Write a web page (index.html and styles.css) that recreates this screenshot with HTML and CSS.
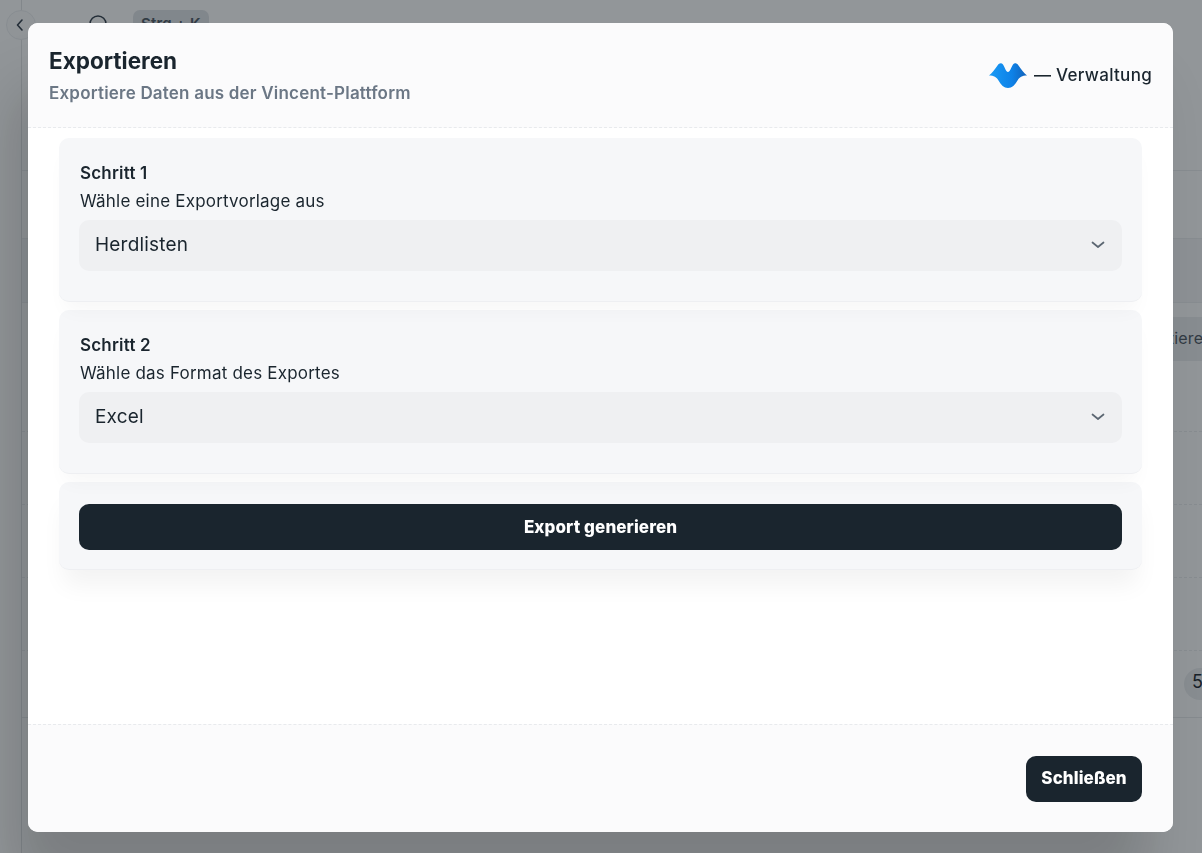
FILE: index.html
```html
<!DOCTYPE html>
<html lang="de">
<head>
<meta charset="utf-8">
<title>Exportieren</title>
<link rel="stylesheet" href="styles.css">
</head>
<body>
<div class="app">
  <aside class="rail"></aside>
  <main class="page">
    <div class="topbar">
      <span class="back"><svg width="10" height="14" viewBox="0 0 10 14"><path d="M7 2 2.500 7 7 12" fill="none" stroke="#2f3a47" stroke-width="1.600" stroke-linecap="round" stroke-linejoin="round"/></svg></span>
      <svg class="search" width="22" height="22" viewBox="0 0 22 22"><circle cx="10" cy="10" r="8" fill="none" stroke="#2f3a47" stroke-width="1.500"/></svg>
      <span class="kbd">Strg + K</span>
    </div>
    <div class="rows">
      <div class="row r1"></div>
      <div class="row r2"></div>
      <div class="row r5"><span class="chip">Exportieren</span></div>
      <div class="row r3"></div>
      <div class="row r3"></div>
      <div class="row r3"></div>
      <div class="row r4"><span class="num">50</span></div>
    </div>
  </main>
</div>
<div class="overlay"></div>
<section class="modal">
  <header class="head">
    <div>
      <h1>Exportieren</h1>
      <p class="sub">Exportiere Daten aus der Vincent-Plattform</p>
    </div>
    <div class="brand">
      <svg width="38" height="26" viewBox="0 0 38 26">
        <defs><linearGradient id="g" x1="0" x2="1" y1="0" y2="0"><stop offset="0" stop-color="#1a9bf5"/><stop offset=".6" stop-color="#0e82e8"/><stop offset="1" stop-color="#1160b8"/></linearGradient></defs>
        <path d="M0 13.500C3 11.500 6 7 8.500 3.500 10 1 12.500.5 14 2.500 16 5.500 17 10 19 10 21 10 22 5.500 24 2.500 25.500.5 28 1 29.500 3.500 32 7 35 11.500 38 13.500 33 13.500 30.500 15 28.500 18.500 26 23 23 26 19 26 15 26 12 23 9.500 18.500 7.500 15 5 13.500 0 13.500Z" fill="url(#g)"/>
      </svg>
      <span>— Verwaltung</span>
    </div>
  </header>
  <div class="content">
    <div class="card">
      <h2>Schritt 1</h2>
      <label class="hint">Wähle eine Exportvorlage aus</label>
      <div class="select"><span>Herdlisten</span><svg width="14" height="8" viewBox="0 0 14 8"><path d="M1.500 1.500 7 6 12.500 1.500" fill="none" stroke="#5b6672" stroke-width="1.700" stroke-linecap="round" stroke-linejoin="round"/></svg></div>
    </div>
    <div class="card">
      <h2>Schritt 2</h2>
      <label class="hint">Wähle das Format des Exportes</label>
      <div class="select"><span>Excel</span><svg width="14" height="8" viewBox="0 0 14 8"><path d="M1.500 1.500 7 6 12.500 1.500" fill="none" stroke="#5b6672" stroke-width="1.700" stroke-linecap="round" stroke-linejoin="round"/></svg></div>
    </div>
    <div class="card action">
      <button class="btn wide">Export generieren</button>
    </div>
  </div>
  <footer class="foot">
    <button class="btn close">Schließen</button>
  </footer>
</section>
</body>
</html>
```
FILE: styles.css
```css
* { box-sizing: border-box; }
html, body { margin: 0; height: 100%; overflow: hidden; }
body { font-family: Inter, "Liberation Sans", sans-serif; color: #1a252e; background: #fff; letter-spacing: .2px; }

.app { display: flex; height: 853px; width: 1202px; }
.rail { width: 22px; flex: none; border-right: 1px solid #e0e2e4; }
.page { flex: 1; min-width: 0; }
.topbar { height: 170px; display: flex; align-items: flex-start; }
.back { width: 30px; height: 30px; margin: 10px 0 0 -16px; border-radius: 50%; background: #fbfbfc; border: 1px solid #eceef0; display: flex; align-items: center; justify-content: center; flex: none; }
.back svg { margin-left: -2px; }
.search { margin: 14px 0 0 52px; flex: none; }
.kbd { margin: 10px 0 0 23px; height: 26px; padding: 4px 8px; border-radius: 7px; background: #dfe2e6; font-size: 15px; font-weight: 600; color: #4b5560; }
.row { border-top: 1px solid #eceef0; }
.r1 { height: 68px; }
.r2 { height: 64px; background: #f5f6f8; }
.r5 { height: 129px; display: flex; justify-content: flex-end; align-items: flex-start; }
.r3 { height: 73px; border-top-style: dashed; }
.r4 { height: 68px; border-top-style: dashed; border-bottom: 1px solid #e8eaec; display: flex; align-items: center; justify-content: flex-end; }
.chip { margin: 14px -11px 0 0; padding: 11px 0 0; background: #eceef0; border-radius: 6px 0 0 6px; font-size: 16px; color: #4b5560; width: 48px; height: 44px; overflow: hidden; white-space: nowrap; display: flex; justify-content: flex-end; }
.num { width: 18px; height: 32px; padding: 3px 0 0 8px; background: #eceef0; border-radius: 16px 0 0 16px; font-size: 18px; overflow: hidden; white-space: nowrap; color: #1a252e; }

.overlay { position: fixed; inset: 0; background: rgba(24, 32, 38, .47); }

.modal { position: fixed; left: 28px; top: 23px; width: 1145px; height: 809px; background: #fff; border-radius: 10px; display: flex; flex-direction: column; box-shadow: -20px 60px 60px -5px rgba(0, 0, 0, .17); }
.head { height: 105px; flex: none; background: #fbfbfc; border-bottom: 1px dashed #e8eaed; border-radius: 10px 10px 0 0; padding: 24px 21px 0; display: flex; justify-content: space-between; }
h1 { margin: 0; font-size: 22.500px; line-height: 28px; font-weight: 700; letter-spacing: 0; }
.sub { margin: 6px 0 0; font-size: 17px; line-height: 24px; font-weight: 600; color: #6b7785; }
.brand { display: flex; align-items: center; gap: 7px; height: 56px; font-size: 17px; font-weight: 500; letter-spacing: .3px; }
.content { flex: 1; min-height: 0; padding: 10px 31px 0; display: flex; flex-direction: column; gap: 8px; }
.card { position: relative; background: #f6f7f9; border-radius: 10px; border-bottom: 1px solid #eeeff2; padding: 22px 20px 0; height: 164px; box-shadow: 0 14px 20px -6px rgba(0,0,0,.035); }
.card:nth-child(1) { z-index: 3; }
.card:nth-child(2) { z-index: 2; }
h2 { margin: 0; padding-left: 1px; font-size: 17px; line-height: 27px; font-weight: 600; }
.hint { display: block; padding-left: 1px; font-size: 17px; line-height: 28px; }
.select { margin-top: 5px; height: 51px; border-radius: 10px; background: #eff0f2; padding: 0 17px 2px 16px; display: flex; justify-content: space-between; align-items: center; font-size: 19px; }
.action { height: 88px; padding-top: 22px; box-shadow: 0 20px 25px -5px rgba(0,0,0,.05); }
.btn { border: 0; background: #1a252e; color: #fff; font: 800 17px Inter, "Liberation Sans", sans-serif; letter-spacing: .1px; border-radius: 10px; height: 46px; }
.wide { width: 100%; }
.foot { height: 108px; flex: none; background: #fbfbfc; border-top: 1px dashed #e8eaed; border-radius: 0 0 10px 10px; padding: 31px 31px 0; display: flex; justify-content: flex-end; }
.close { width: 116px; padding-bottom: 3px; }
```
